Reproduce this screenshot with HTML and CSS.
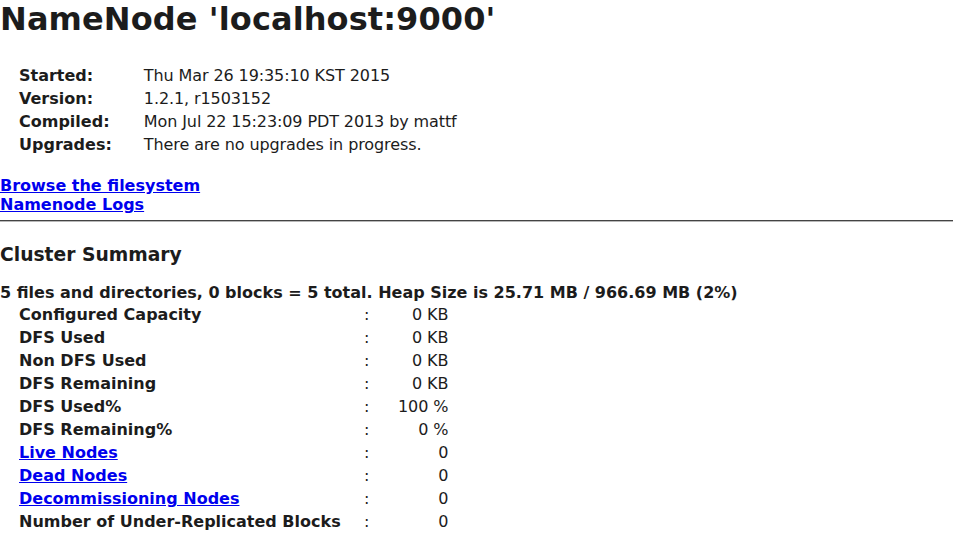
FILE: index.html
```html
<!DOCTYPE html>
<html>
<head>
<meta charset="utf-8">
<title>Hadoop NameNode localhost:9000</title>
<link rel="stylesheet" href="styles.css">
</head>
<body>
<h1 class="title">NameNode 'localhost:9000'</h1>
<div class="dfstable info">
<table>
<tr><td class="col1">Started:</td><td class="val">Thu Mar 26 19:35:10 KST 2015</td></tr>
<tr><td class="col1">Version:</td><td class="val">1.2.1, r1503152</td></tr>
<tr><td class="col1">Compiled:</td><td class="val">Mon Jul 22 15:23:09 PDT 2013 by mattf</td></tr>
<tr><td class="col1">Upgrades:</td><td class="val">There are no upgrades in progress.</td></tr>
</table>
</div>
<div class="links">
<b><a href="#">Browse the filesystem</a></b><br>
<b><a href="#">Namenode Logs</a></b>
</div>
<hr class="rule">
<h3 class="section">Cluster Summary</h3>
<b class="summary">5 files and directories, 0 blocks = 5 total. Heap Size is 25.71 MB / 966.69 MB (2%)</b>
<div class="dfstable stats">
<table>
<tr><td class="col1">Configured Capacity</td><td class="col2">:</td><td class="col3">0 KB</td></tr>
<tr><td class="col1">DFS Used</td><td class="col2">:</td><td class="col3">0 KB</td></tr>
<tr><td class="col1">Non DFS Used</td><td class="col2">:</td><td class="col3">0 KB</td></tr>
<tr><td class="col1">DFS Remaining</td><td class="col2">:</td><td class="col3">0 KB</td></tr>
<tr><td class="col1">DFS Used%</td><td class="col2">:</td><td class="col3">100 %</td></tr>
<tr><td class="col1">DFS Remaining%</td><td class="col2">:</td><td class="col3">0 %</td></tr>
<tr><td class="col1"><a href="#">Live Nodes</a></td><td class="col2">:</td><td class="col3">0</td></tr>
<tr><td class="col1"><a href="#">Dead Nodes</a></td><td class="col2">:</td><td class="col3">0</td></tr>
<tr><td class="col1"><a href="#">Decommissioning Nodes</a></td><td class="col2">:</td><td class="col3">0</td></tr>
<tr><td class="col1">Number of Under-Replicated Blocks</td><td class="col2">:</td><td class="col3">0</td></tr>
</table>
</div>
</body>
</html>
```
FILE: styles.css
```css
html, body {
  background: #ffffff;
}
body {
  margin: 0;
  font-family: "DejaVu Sans", sans-serif;
  font-size: 16px;
  color: #1c1c1c;
  letter-spacing: -0.1px;
}
b, h3, .col1 {
  letter-spacing: 0;
}
a {
  color: #0000ee;
}
.title {
  font-size: 32px;
  margin: 0 0 25px 0;
  letter-spacing: 0.1px;
}
.dfstable table {
  border-spacing: 2px;
  white-space: pre;
}
.dfstable td {
  padding: 1px;
}
.dfstable td.col1 {
  font-weight: bold;
  padding-left: 17px;
}
.info td.val {
  padding-left: 29px;
}
.links {
  margin-top: 19px;
}
.rule {
  margin: 6px 0 0 0;
  height: 0;
  border: 0;
  border-top: 1px solid #444444;
  border-bottom: 1px solid #b8b8b8;
}
.section {
  font-size: 18.72px;
  margin: 22px 0 18px 0;
}
.summary {
  display: block;
}
.stats td.col1 {
  width: 341px;
}
.stats td.col2 {
  width: 30px;
}
.stats td.col3 {
  text-align: right;
  width: 47px;
}
```
